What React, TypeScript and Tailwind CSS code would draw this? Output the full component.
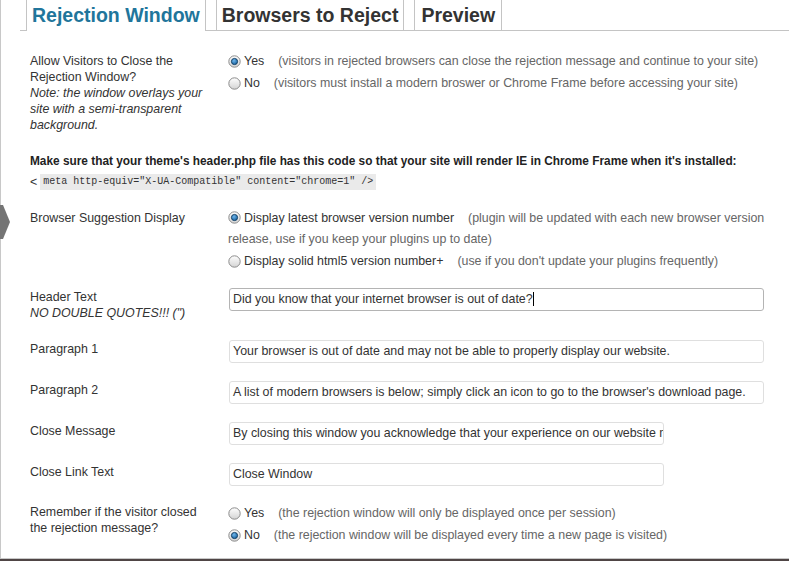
import React from "react";

type RadioProps = { checked?: boolean };

function Radio({ checked }: RadioProps) {
  return (
    <svg
      width="13"
      height="13"
      viewBox="0 0 13 13"
      className="inline-block shrink-0 align-[-2px]"
    >
      <defs>
        <linearGradient id="rg" x1="0" y1="0" x2="0" y2="1">
          <stop offset="0" stopColor="#fefefe" />
          <stop offset="1" stopColor="#d4d4d4" />
        </linearGradient>
        <radialGradient id="dot" cx="0.4" cy="0.35" r="0.7">
          <stop offset="0" stopColor="#6fb6ec" />
          <stop offset="1" stopColor="#135e9c" />
        </radialGradient>
      </defs>
      <circle cx="6.5" cy="6.5" r="5.7" fill="url(#rg)" stroke="#8c8c8c" strokeWidth="1" />
      {checked && (
        <circle cx="6.5" cy="6.5" r="3.1" fill="url(#dot)" stroke="#0f3a5f" strokeWidth="0.9" />
      )}
    </svg>
  );
}

type OptionProps = {
  checked?: boolean;
  label: string;
  note: string;
};

function Option({ checked, label, note }: OptionProps) {
  return (
    <div className="flex items-center h-[22px] whitespace-nowrap">
      <Radio checked={checked} />
      <span className="ml-[3px] text-[#333]">{label}</span>
      <span className="ml-[14px] text-[#666]">{note}</span>
    </div>
  );
}

type FieldProps = {
  label: React.ReactNode;
  value: string;
  wide?: boolean;
  focused?: boolean;
  className?: string;
};

function Field({ label, value, wide = true, focused, className }: FieldProps) {
  return (
    <div className={`flex items-start ${className ?? ""}`}>
      <div className="w-[198px] pt-px leading-4 text-[#333]">{label}</div>
      <div
        className={`ml-px h-[23px] ${wide ? "w-[535px]" : "w-[435px]"} rounded-[3px] border ${
          focused ? "border-[#b4b4b4]" : "border-[#dfdfdf]"
        } bg-white pl-[3px] leading-[21px] text-[#333] whitespace-nowrap overflow-hidden`}
      >
        {value}
        {focused && <span className="inline-block w-px h-[14px] bg-black align-[-3px]" />}
      </div>
    </div>
  );
}

export default function App() {
  return (
    <div className="relative w-[789px] h-[561px] flex flex-col bg-white font-['Liberation_Sans',Arial,sans-serif] text-[12.4px] overflow-hidden">
      <div className="flex-1 border-l border-b border-[#c8c8c8]">
        {/* tabs */}
        <div className="ml-[19px] pl-[6px] h-[31px] flex gap-[10px] border-b border-[#c4c4c4]">
          <div className="h-[31px] px-[5px] border-x border-[#c4c4c4] bg-white text-[19.5px] font-bold leading-[30px] text-[#21759b]">
            Rejection Window
          </div>
          <div className="h-[30px] px-[5px] border-x border-[#c4c4c4] text-[19.5px] font-bold leading-[30px] text-[#333]">
            Browsers to Reject
          </div>
          <div className="h-[30px] px-[6px] border-x border-[#c4c4c4] text-[19.5px] font-bold leading-[30px] text-[#333]">
            Preview
          </div>
        </div>

        <div className="pl-[29px]">
          {/* allow close */}
          <div className="flex items-start mt-[19px]">
            <div className="w-[198px] pt-[3px] leading-4 text-[#333]">
              <div className="w-[180px]">Allow Visitors to Close the Rejection Window?</div>
              <div className="w-[180px] italic">
                Note: the window overlays your site with a semi-transparent background.
              </div>
            </div>
            <div>
              <Option
                checked
                label="Yes"
                note="(visitors in rejected browsers can close the rejection message and continue to your site)"
              />
              <Option
                label="No"
                note="(visitors must install a modern broswer or Chrome Frame before accessing your site)"
              />
            </div>
          </div>

          <p className="mt-[20px] leading-4 font-bold text-[11.85px] text-[#222]">
            Make sure that your theme's header.php file has this code so that your site will render IE in
            Chrome Frame when it's installed:
          </p>
          <div className="mt-[5px] h-4 leading-4 text-[#333] flex items-center">
            <span>&lt;</span>
            <code className="ml-[3px] px-[3px] bg-[#eaeaea] font-['Liberation_Mono',monospace] text-[10px] leading-4 text-[#333]">
              meta http-equiv="X-UA-Compatible" content="chrome=1" /&gt;
            </code>
          </div>

          {/* browser suggestion */}
          <div className="flex items-start mt-[18px]">
            <div className="w-[198px] pt-[2px] leading-4 text-[#333]">Browser Suggestion Display</div>
            <div className="w-[545px] leading-[21px]">
              <div>
                <Radio checked />
                <span className="ml-[3px] text-[#333]">Display latest browser version number</span>
                <span className="ml-[14px] text-[#666]">
                  (plugin will be updated with each new browser version
                  <br />
                  release, use if you keep your plugins up to date)
                </span>
              </div>
              <Option
                label="Display solid html5 version number+"
                note="(use if you don't update your plugins frequently)"
              />
            </div>
          </div>

          <Field
            className="mt-[16px]"
            focused
            label={
              <>
                <div>Header Text</div>
                <div className="italic">NO DOUBLE QUOTES!!! (")</div>
              </>
            }
            value="Did you know that your internet browser is out of date?"
          />
          <Field
            className="mt-[19px]"
            label="Paragraph 1"
            value="Your browser is out of date and may not be able to properly display our website."
          />
          <Field
            className="mt-[18px]"
            label="Paragraph 2"
            value="A list of modern browsers is below; simply click an icon to go to the browser's download page."
          />
          <Field
            className="mt-[18px]"
            wide={false}
            label="Close Message"
            value="By closing this window you acknowledge that your experience on our website may be diminished."
          />
          <Field className="mt-[18px]" wide={false} label="Close Link Text" value="Close Window" />

          {/* remember */}
          <div className="flex items-start mt-[16px]">
            <div className="w-[198px] pt-[2px] leading-4 text-[#333]">
              <div className="w-[180px]">Remember if the visitor closed the rejection message?</div>
            </div>
            <div>
              <Option label="Yes" note="(the rejection window will only be displayed once per session)" />
              <Option checked label="No" note="(the rejection window will be displayed every time a new page is visited)" />
            </div>
          </div>
        </div>
      </div>
      <div className="h-[2px] bg-[#4f4545]" />

      {/* admin menu pointer on the left edge */}
      <svg className="absolute left-0 top-[205px]" width="10" height="34" viewBox="0 0 10 34">
        <polygon points="0,0 3,0 10,17 3,34 0,34" fill="#747474" />
      </svg>
    </div>
  );
}
